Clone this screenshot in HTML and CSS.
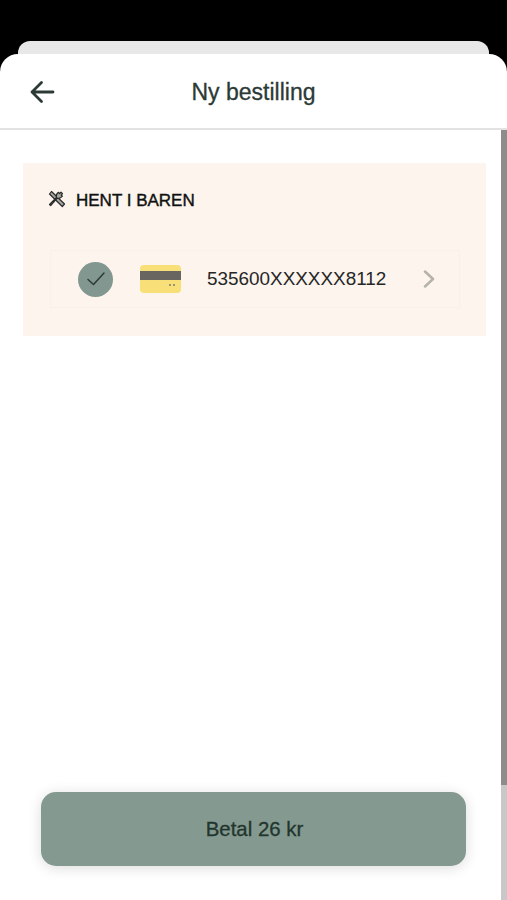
FILE: index.html
```html
<!DOCTYPE html>
<html lang="en">
<head>
    <title>Ny bestilling</title>
    <link rel="stylesheet" href="styles.css">
</head>
<body>
    <div class="backSheet"></div>
    <div class="sheet">
        <header>
            <svg class="backIcon" width="26" height="24" viewBox="0 0 26 24">
                <path d="M24 12H3M12.500 2.500L3 12l9.500 9.500" fill="none" stroke="#2c3a36" stroke-width="2.800" stroke-linecap="round" stroke-linejoin="round"/>
            </svg>
            <h1>Ny bestilling</h1>
        </header>

        <div class="page">
            <main>
                <section class="pickup">
                    <div class="pickupTitle">
                        <svg width="18" height="18" viewBox="0 0 18 18">
                            <path d="M3.500 1.500l13 12.500-2.200 2.500L1.500 4z" fill="#a8a8a4" stroke="#2a2a2a" stroke-width="1.200" stroke-linejoin="round"/>
                            <path d="M1.500 14.500l7-7c-.7-2 .5-4 2-5.200l1.200 1.200 1.300-1.300 1.500 1.500-1.300 1.300 1.200 1.200c-1.200 1.500-3.300 2.600-5.200 2l-6.500 7.300z" fill="#a8a8a4" stroke="#2a2a2a" stroke-width="1.200" stroke-linejoin="round"/>
                        </svg>
                        <h2>HENT I BAREN</h2>
                    </div>
                    <div class="cardRow">
                        <span class="check">
                            <svg width="20" height="16" viewBox="0 0 20 16">
                                <path d="M2 8.500l5.500 5L18 2" fill="none" stroke="#2c3a36" stroke-width="1.500" stroke-linecap="round" stroke-linejoin="round"/>
                            </svg>
                        </span>
                        <span class="creditCard"><span class="stripe"></span><span class="dots"></span></span>
                        <span class="cardNumber">535600XXXXXX8112</span>
                        <svg class="chevron" width="12" height="18" viewBox="0 0 12 18">
                            <path d="M2 1.500l8 7.500-8 7.500" fill="none" stroke="#b5b2ac" stroke-width="2.500" stroke-linecap="round" stroke-linejoin="round"/>
                        </svg>
                    </div>
                </section>
                <button class="payButton">Betal 26 kr</button>
            </main>
            <div class="scrollbar"><div class="thumb"></div></div>
        </div>
    </div>
</body>
</html>
```

FILE: styles.css
```css
html, body {
    height: 100%;
}

body {
    margin: 0;
    padding-top: 41px;
    box-sizing: border-box;
    background-color: #000;
    font-family: "Liberation Sans", Arial, sans-serif;
    display: flex;
    flex-direction: column;
    overflow: hidden;
}

.backSheet {
    flex: none;
    height: 13px;
    margin: 0 18px;
    background-color: #e8e8e8;
    border-radius: 12px 12px 0 0;
}

.sheet {
    flex: 1;
    min-height: 0;
    display: flex;
    flex-direction: column;
    background-color: #fff;
    border-radius: 18px 18px 0 0;
}

header {
    flex: none;
    height: 72px;
    padding-top: 2px;
    display: flex;
    align-items: center;
    justify-content: center;
    position: relative;
    border-bottom: 2px solid #e2e2e2;
}

.backIcon {
    position: absolute;
    left: 29px;
    top: 26px;
}

h1 {
    margin: 0;
    font-size: 23px;
    font-weight: normal;
    color: #2c3a36;
    -webkit-text-stroke: 0.3px #2c3a36;
}

.page {
    flex: 1;
    min-height: 0;
    display: flex;
}

main {
    flex: 1;
    display: flex;
    flex-direction: column;
    padding: 33px 15px 34px 23px;
}

.pickup {
    height: 173px;
    box-sizing: border-box;
    padding: 27px 26px 0 25px;
    background-color: #fcf4ed;
}

.pickupTitle {
    display: flex;
    align-items: center;
    gap: 10px;
    height: 20px;
}

.pickupTitle svg {
    margin-top: -2px;
}

h2 {
    margin: 2px 0 0;
    font-size: 17px;
    font-weight: normal;
    color: #111;
    -webkit-text-stroke: 0.4px #111;
}

.cardRow {
    display: flex;
    align-items: center;
    box-sizing: border-box;
    height: 58px;
    margin: 40px 0 0 2px;
    padding: 0 24px 0 27px;
    border: 1px solid #f9f0e8;
}

.check {
    width: 35px;
    height: 35px;
    flex: none;
    border-radius: 50%;
    background-color: #82978f;
    display: flex;
    align-items: center;
    justify-content: center;
}

.creditCard {
    width: 41px;
    height: 28px;
    flex: none;
    margin-left: 27px;
    border-radius: 4px;
    background-color: #f9df78;
    position: relative;
}

.stripe {
    position: absolute;
    left: 0;
    right: 0;
    top: 6px;
    height: 9px;
    background-color: #686560;
}

.dots {
    position: absolute;
    right: 6px;
    top: 19px;
    width: 6px;
    height: 2px;
    background-image: linear-gradient(to right, #9c9270 2px, transparent 2px, transparent 4px, #9c9270 4px);
}

.cardNumber {
    flex: 1;
    margin-left: 26px;
    font-size: 18.900px;
    color: #262626;
}

.payButton {
    margin: auto 20px 0 18px;
    height: 74px;
    border: none;
    border-radius: 15px;
    background-color: #84998f;
    color: #22352e;
    font-family: inherit;
    font-size: 20.400px;
    -webkit-text-stroke: 0.3px #22352e;
    padding: 0 0 0 2px;
    box-shadow: 0 2px 14px rgba(0, 0, 0, 0.14);
    cursor: pointer;
}

.scrollbar {
    flex: none;
    width: 6px;
    background-color: #c8c8c8;
}

.thumb {
    height: 655px;
    background-color: #8c8c8c;
}
```
